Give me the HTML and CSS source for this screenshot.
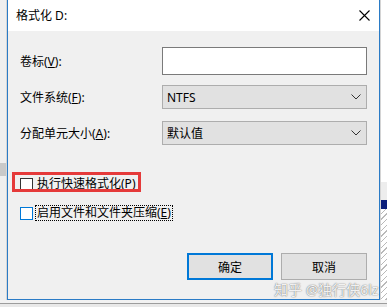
FILE: index.html
```html
<!DOCTYPE html>
<html lang="zh-CN">
<head>
    <meta charset="UTF-8">
    <title>格式化 D:</title>
    <link rel="stylesheet" href="styles.css">
</head>
<body>
    <div class="screen">
        <div class="edge-left"><div class="band"></div></div>
        <div class="dialog">
            <div class="titlebar">
                <span class="title">格式化 D:</span>
                <svg class="close" width="11" height="11" viewBox="0 0 11 11">
                    <path d="M0.5 0.5 L10.5 10.5 M10.5 0.5 L0.5 10.5" stroke="#000" stroke-width="1.1" fill="none"/>
                </svg>
            </div>
            <div class="content">
                <div class="row row-label">
                    <label class="field-label">卷标(<u>V</u>):</label>
                    <div class="textbox"></div>
                </div>
                <div class="row row-fs">
                    <label class="field-label">文件系统(<u>F</u>):</label>
                    <div class="combo">
                        <span>NTFS</span>
                        <svg width="10" height="6" viewBox="0 0 10 6"><path d="M0.5 0.5 L5 5 L9.5 0.5" stroke="#333" fill="none"/></svg>
                    </div>
                </div>
                <div class="row">
                    <label class="field-label">分配单元大小(<u>A</u>):</label>
                    <div class="combo">
                        <span>默认值</span>
                        <svg width="10" height="6" viewBox="0 0 10 6"><path d="M0.5 0.5 L5 5 L9.5 0.5" stroke="#333" fill="none"/></svg>
                    </div>
                </div>
                <div class="options">
                    <label class="check">
                        <span class="box"></span>
                        <span class="check-text">执行快速格式化(<u>P</u>)</span>
                    </label>
                    <label class="check focused">
                        <span class="box"></span>
                        <span class="check-text">启用文件和文件夹压缩(<u>E</u>)</span>
                    </label>
                </div>
                <div class="buttons">
                    <button class="btn btn-default">确定</button>
                    <button class="btn">取消</button>
                </div>
            </div>
        </div>
        <div class="edge-right">
            <div class="er-top"></div>
            <div class="er-gray"></div>
            <div class="er-navy"></div>
            <div class="er-hatch"></div>
        </div>
        <div class="bottom-strip"></div>
        <div class="highlight"></div>
        <div class="watermark">知乎 @独行侠6lz</div>
    </div>
</body>
</html>
```

FILE: styles.css
```css
* { box-sizing: border-box; }
body {
    margin: 0;
    font-family: "Noto Sans", "Noto Sans CJK SC", sans-serif;
    font-size: 12px;
    color: #000;
}
.screen {
    position: relative;
    width: 387px;
    height: 307px;
    overflow: hidden;
    display: grid;
    grid-template-columns: 7px 373px 7px;
    grid-template-rows: 300px 7px;
    background: #ececec;
}
.edge-left {
    background: #efefef;
    border-right: 1px solid #d6d6d6;
    padding-top: 163px;
}
.edge-left .band { height: 13px; background: #c9c9c9; }

.dialog {
    border: 1px solid #2a7bc6;
    border-top: none;
    display: flex;
    flex-direction: column;
}
.titlebar {
    height: 31px;
    background: #fff;
    display: flex;
    align-items: center;
    justify-content: space-between;
    padding: 0 9px 1px 8px;
}
.close { margin-top: 1px; }
.content {
    flex: 1;
    background: #f0f0f0;
    padding: 16px 11px 0 12px;
}
.row { display: flex; align-items: center; }
.row-label { margin-bottom: 10px; }
.row-fs { margin-bottom: 12px; }
.field-label { width: 142px; }
.textbox {
    width: 205px;
    height: 28px;
    background: #fff;
    border: 1px solid #7a7a7a;
}
.combo {
    width: 205px;
    height: 24px;
    background: #e1e1e1;
    border: 1px solid #adadad;
    display: flex;
    align-items: center;
    justify-content: space-between;
    padding: 0 5px 0 4px;
}
.options {
    margin-top: 31px;
    display: flex;
    flex-direction: column;
    gap: 13px;
}
.check { display: flex; align-items: center; height: 16px; }
.box {
    width: 13px;
    height: 13px;
    border: 1px solid #333;
    background: #fff;
    margin-right: 2px;
}
.check-text { padding: 0 1px; line-height: 14px; border: 1px dotted transparent; }
.focused .box { border-color: #0078d7; }
.focused .check-text { border-color: #000; }

.buttons {
    margin-top: 32px;
    padding-right: 1px;
    display: flex;
    justify-content: flex-end;
    gap: 8px;
}
.btn {
    width: 86px;
    height: 27px;
    background: #e1e1e1;
    border: 1px solid #adadad;
    font: inherit;
    color: #000;
    padding: 0;
}
.btn-default { border: 2px solid #0078d7; }

.edge-right { display: flex; flex-direction: column; border-left: 1px solid #d4d4d4; }
.er-top { height: 182px; background: #fff; }
.er-gray { height: 18px; background: #ededed; }
.er-navy { height: 9px; background: #0c1f7a; }
.er-hatch {
    flex: 1;
    background: repeating-linear-gradient(135deg, #fff 0 3px, #b9b9b9 3px 4px);
}
.bottom-strip {
    grid-column: 1 / 4;
    background: #e9e9e9;
    border-top: 3px solid #f2f2f2;
    box-shadow: inset 0 1px 0 #9d9d9d;
}

.highlight {
    position: absolute;
    left: 12px;
    top: 172px;
    width: 129px;
    height: 20px;
    border: 3px solid #e53a3a;
}
.watermark {
    position: absolute;
    left: 274px;
    top: 279px;
    font-size: 14px;
    color: rgba(255, 255, 255, 0.92);
    text-shadow: 0 0 1px rgba(0, 0, 0, 0.55), 0 0 2px rgba(0, 0, 0, 0.25);
    white-space: nowrap;
}
```
